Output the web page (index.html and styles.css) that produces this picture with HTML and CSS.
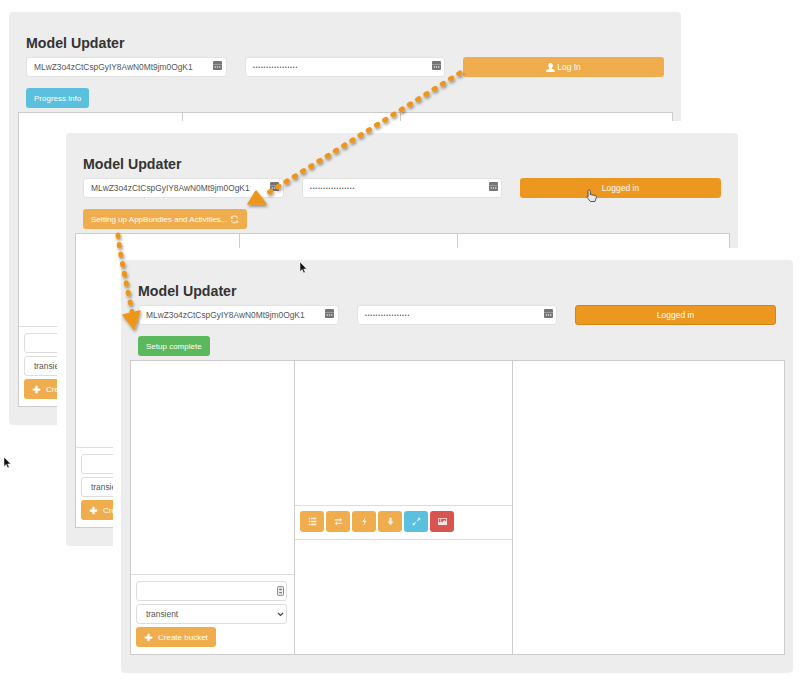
FILE: index.html
```html
<!DOCTYPE html>
<html lang="en">
<head>
<meta charset="UTF-8">
<meta name="viewport" content="width=device-width, initial-scale=1.0">
<title>Model Updater</title>
<link rel="stylesheet" href="styles.css">
</head>
<body>

<svg width="0" height="0" class="defs">
    <symbol id="i-key" viewBox="0 0 12 12"><rect width="12" height="12" rx="1.5" fill="#757575"/><rect y="4" width="12" height="1" fill="#a8a8a8"/><circle cx="3" cy="8" r="1" fill="#eee"/><circle cx="6" cy="8" r="1" fill="#eee"/><circle cx="9" cy="8" r="1" fill="#eee"/></symbol>
    <symbol id="i-list" viewBox="0 0 12 12"><path d="M1 1h2v2H1zM4 1h7v2H4zM1 5h2v2H1zM4 5h7v2H4zM1 9h2v2H1zM4 9h7v2H4z" fill="#fff"/></symbol>
    <symbol id="i-swap" viewBox="0 0 12 12"><path d="M1 3h7V1l3 2.500L8 6V4.500H1zM11 7.500H4V6L1 8.500 4 11V9h7z" fill="#fff"/></symbol>
    <symbol id="i-flash" viewBox="0 0 12 12"><path d="M7.500 0 3 6.800h2.600L4.500 12 9 5H6.400z" fill="#fff"/></symbol>
    <symbol id="i-down" viewBox="0 0 12 12"><path d="M4.500 1h3v5H10l-4 5-4-5h2.500z" fill="#fff"/></symbol>
    <symbol id="i-resize" viewBox="0 0 12 12"><path d="M7.500 1H11v3.500L9.700 3.200 7.400 5.500 6.500 4.600 8.800 2.300zM4.500 11H1V7.500l1.300 1.300 2.300-2.300.9.900-2.300 2.300z" fill="#fff"/></symbol>
    <symbol id="i-picture" viewBox="0 0 12 12"><path d="M0 1.500h12v9H0zM1 2.500v5l2.500-2 2 1.500 3-3L11 6.500v-4z" fill="#fff" fill-rule="evenodd"/><circle cx="3.500" cy="4" r="1" fill="#fff"/></symbol>
    <symbol id="i-plus" viewBox="0 0 12 12"><path d="M4.500 1h3v3.500H11v3H7.500V11h-3V7.500H1v-3h3.500z" fill="#fff"/></symbol>
    <symbol id="i-user" viewBox="0 0 12 12"><path d="M6 0c2 0 3 1.500 3 3.300 0 1.400-.6 2.500-1.500 3.200v1.200C9.500 8.300 12 9 12 12H0c0-3 2.500-3.700 4.500-4.300V6.500C3.600 5.800 3 4.700 3 3.300 3 1.500 4 0 6 0z" fill="#fff"/></symbol>
    <symbol id="i-refresh" viewBox="0 0 12 12"><path d="M10.300 4.500A4.600 4.600 0 0 0 2 3.600M1.700 7.500A4.600 4.600 0 0 0 10 8.400" fill="none" stroke="#fff" stroke-width="1.200"/><path d="M1.200 1.300v3.200h3.200zM10.800 10.700V7.500H7.600z" fill="#fff"/></symbol>
</svg>

<!-- first step -->
<section class="shot shot-login">
    <div class="panel">
        <h1>Model Updater</h1>
        <div class="login-row">
            <div class="field"><input type="text" value="MLwZ3o4zCtCspGyIY8AwN0Mt9jm0OgK1"><svg class="field-icon"><use href="#i-key"/></svg></div>
            <div class="field"><input type="password" value="aaaaaaaaaaaaaaaaa"><svg class="field-icon"><use href="#i-key"/></svg></div>
            <button class="btn btn-orange btn-wide"><svg class="ico"><use href="#i-user"/></svg>Log In</button>
        </div>
        <div class="status-row"><button class="btn btn-blue">Progress info</button></div>
        <div class="workspace">
            <div class="col col-buckets">
                <div class="bucket-list"></div>
                <div class="bucket-form">
                    <div class="field"><input type="text"></div>
                    <select><option>transient</option></select>
                    <div><button class="btn btn-orange btn-create"><svg class="ico ico-plus"><use href="#i-plus"/></svg>Create bucket</button></div>
                </div>
            </div>
            <div class="col col-objects"></div>
            <div class="col col-viewer"></div>
        </div>
    </div>
</section>

<!-- second step -->
<section class="shot shot-setup">
    <div class="panel">
        <h1>Model Updater</h1>
        <div class="login-row">
            <div class="field"><input type="text" value="MLwZ3o4zCtCspGyIY8AwN0Mt9jm0OgK1"><svg class="field-icon"><use href="#i-key"/></svg></div>
            <div class="field"><input type="password" value="aaaaaaaaaaaaaaaaa"><svg class="field-icon"><use href="#i-key"/></svg></div>
            <button class="btn btn-dark btn-wide">Logged in</button>
        </div>
        <div class="status-row"><button class="btn btn-orange">Setting up AppBundles and Activities...<svg class="ico"><use href="#i-refresh"/></svg></button></div>
        <div class="workspace">
            <div class="col col-buckets">
                <div class="bucket-list"></div>
                <div class="bucket-form">
                    <div class="field"><input type="text"></div>
                    <select><option>transient</option></select>
                    <div><button class="btn btn-orange btn-create"><svg class="ico ico-plus"><use href="#i-plus"/></svg>Create bucket</button></div>
                </div>
            </div>
            <div class="col col-objects"></div>
            <div class="col col-viewer"></div>
        </div>
    </div>
</section>

<!-- third step -->
<section class="shot shot-done">
    <div class="panel">
        <h1>Model Updater</h1>
        <div class="login-row">
            <div class="field"><input type="text" value="MLwZ3o4zCtCspGyIY8AwN0Mt9jm0OgK1"><svg class="field-icon"><use href="#i-key"/></svg></div>
            <div class="field"><input type="password" value="aaaaaaaaaaaaaaaaa"><svg class="field-icon"><use href="#i-key"/></svg></div>
            <button class="btn btn-dark btn-wide btn-outlined">Logged in</button>
        </div>
        <div class="status-row"><button class="btn btn-green">Setup complete</button></div>
        <div class="workspace">
            <div class="col col-buckets">
                <div class="bucket-list"></div>
                <div class="bucket-form">
                    <div class="field">
                        <input type="text">
                        <svg class="field-icon field-icon-small" viewBox="0 0 8 11"><rect x=".5" y=".5" width="7" height="10" rx="1" fill="#eee" stroke="#777"/><path d="M2.500 3h3v1.500h-3zM2.500 6.500h3V8h-3z" fill="#777"/></svg>
                    </div>
                    <select><option>transient</option></select>
                    <div><button class="btn btn-orange btn-create"><svg class="ico ico-plus"><use href="#i-plus"/></svg>Create bucket</button></div>
                </div>
            </div>
            <div class="col col-objects">
                <div class="object-list"></div>
                <div class="toolbar">
                    <button class="btn btn-orange btn-tool"><svg class="ico"><use href="#i-list"/></svg></button>
                    <button class="btn btn-orange btn-tool"><svg class="ico"><use href="#i-swap"/></svg></button>
                    <button class="btn btn-orange btn-tool"><svg class="ico"><use href="#i-flash"/></svg></button>
                    <button class="btn btn-orange btn-tool"><svg class="ico"><use href="#i-down"/></svg></button>
                    <button class="btn btn-blue btn-tool"><svg class="ico"><use href="#i-resize"/></svg></button>
                    <button class="btn btn-red btn-tool"><svg class="ico"><use href="#i-picture"/></svg></button>
                </div>
                <div class="object-info"></div>
            </div>
            <div class="col col-viewer"></div>
        </div>
    </div>
</section>

<!-- annotation arrows and mouse pointers on top of the screenshots -->
<svg class="overlay" width="800" height="683" viewBox="0 0 800 683">
    <defs>
        <filter id="soft" x="-10%" y="-10%" width="120%" height="120%"><feDropShadow dx="1" dy="2" stdDeviation="1.500" flood-color="#000" flood-opacity=".4"/></filter>
    </defs>
    <g filter="url(#soft)">
        <path d="M460 73 L268 193" fill="none" stroke="#ec971f" stroke-width="5" stroke-linecap="round" stroke-dasharray="1.500 8.200"/>
        <path d="M256 191 L248 204 L266 204 Z" fill="#ec971f" stroke="#ec971f" stroke-width="1.500" stroke-linejoin="round"/>
        <path d="M118 235 C120 255 127 285 132 312" fill="none" stroke="#ec971f" stroke-width="5" stroke-linecap="round" stroke-dasharray="1.500 8.200"/>
        <path d="M123 315 L140 311 L134 329 Z" fill="#ec971f" stroke="#ec971f" stroke-width="1.500" stroke-linejoin="round"/>
    </g>
    <path d="M0 0v9.500l2.200-2 1.500 3.400 1.500-.7-1.500-3.200h3z" fill="#111" stroke="#fff" stroke-width=".5" transform="translate(300 262)"/>
    <path d="M0 0v9.500l2.200-2 1.500 3.400 1.500-.7-1.500-3.200h3z" fill="#111" stroke="#fff" stroke-width=".5" transform="translate(4 457)"/>
    <path d="M2 0c1 0 1.300.6 1.300 1.500v3l5 1c1 .3 1.200 1 1 2L8 11.500H3.500L0 7.500c-.5-.8.400-1.500 1.200-1L1 1.500C1 .6 1.200 0 2 0z" fill="#e8e8e8" stroke="#333" stroke-width=".8" transform="translate(587 190)"/>
</svg>

</body>
</html>
```

FILE: styles.css
```css
body {
    font-family: "Liberation Sans", Arial, sans-serif;
    margin: 0;
    padding: 0;
    background-color: #fff;
    width: 800px;
    height: 683px;
    overflow: hidden;
    position: relative;
}

.defs {
    position: absolute;
}

/* the three screenshots sit on a free canvas, each with a white margin that hides the one behind */
.shot {
    position: absolute;
    background-color: #fff;
}

.shot-login {
    left: 9px;
    top: 12px;
}

.shot-setup {
    left: 57px;
    top: 121px;
    right: 0;
    bottom: 0;
    padding: 12px 0 0 9px;
}

.shot-done {
    left: 113px;
    top: 248px;
    right: 0;
    bottom: 0;
    padding: 12px 0 0 8px;
}

.panel {
    width: 672px;
    height: 413px;
    box-sizing: border-box;
    padding: 21px 8px 0 9px;
    background-color: #ededed;
    border-radius: 4px;
}

h1 {
    margin: 0 8px 4px;
    font-size: 14.200px;
    line-height: 20px;
    font-weight: bold;
    color: #333;
}

.login-row {
    display: grid;
    grid-template-columns: 201px 200px 201px;
    column-gap: 18px;
    margin: 0 8px;
}

.status-row {
    margin: 11px 8px 4px;
    display: flex;
}

.field {
    position: relative;
}

input[type="text"],
input[type="password"],
select {
    display: block;
    width: 100%;
    height: 20px;
    box-sizing: border-box;
    padding: 0 7px;
    font-family: inherit;
    font-size: 8.400px;
    color: #555;
    background-color: #fff;
    border: 1px solid #e2e2e2;
    border-radius: 3px;
}

input[type="password"] {
    font-size: 5px;
    letter-spacing: .9px;
}

select {
    appearance: none;
    padding: 0 9px;
    border-color: #ddd;
    background-image: url("data:image/svg+xml,%3Csvg xmlns='http://www.w3.org/2000/svg' width='7' height='5'%3E%3Cpath d='M1 1l2.500 2.500L6 1' fill='none' stroke='%23444' stroke-width='1.200'/%3E%3C/svg%3E");
    background-repeat: no-repeat;
    background-position: right 2px center;
}

.bucket-form input[type="text"] {
    border-color: #ddd;
}

.field-icon {
    position: absolute;
    right: 5px;
    top: 4px;
    width: 9px;
    height: 9px;
}

.field + .field .field-icon {
    right: 4px;
}

.field-icon-small {
    right: 3px;
    top: 5px;
    width: 7px;
    height: 10px;
}

.btn {
    display: flex;
    align-items: center;
    justify-content: center;
    gap: 2px;
    height: 20px;
    padding: 0 8px;
    font-family: inherit;
    font-size: 8px;
    color: #fff;
    white-space: pre;
    border: none;
    border-radius: 3px;
}

.btn-wide {
    font-size: 8.500px;
}

.btn-orange {
    background-color: #f0ad4e;
}

.btn-dark {
    background-color: #ec971f;
}

.btn-outlined {
    border: 1px solid #d58512;
}

.btn-blue {
    background-color: #5bc0de;
}

.btn-green {
    background-color: #5cb85c;
}

.btn-red {
    background-color: #d9534f;
}

.ico {
    width: 9px;
    height: 9px;
}

.workspace {
    display: grid;
    grid-template-columns: 164px 218px 1fr;
    height: 295px;
    background-color: #fff;
    border: 1px solid #ccc;
    box-sizing: border-box;
}

.col {
    display: flex;
    flex-direction: column;
    border-right: 1px solid #ccc;
    min-width: 0;
}

.col-viewer {
    border-right: none;
}

.bucket-list {
    flex: 1;
}

.bucket-form {
    height: 80px;
    box-sizing: border-box;
    padding: 6px 7px 0 5px;
    display: flex;
    flex-direction: column;
    gap: 3px;
    border-top: 1px solid #ddd;
}

.btn-create {
    width: 80px;
    padding: 0 0 0 8px;
    gap: 5px;
    height: 20px;
    justify-content: flex-start;
}

.object-list,
.object-info {
    flex: 1;
}

.object-list {
    flex: 0 0 144px;
}

.toolbar {
    height: 35px;
    box-sizing: border-box;
    padding: 5px;
    display: flex;
    gap: 2px;
    border-top: 1px solid #ddd;
    border-bottom: 1px solid #ddd;
}

.btn-tool {
    width: 24px;
    height: 21px;
    padding: 0;
}

.btn-tool .ico {
    opacity: .85;
}

.overlay {
    position: absolute;
    left: 0;
    top: 0;
}
```
